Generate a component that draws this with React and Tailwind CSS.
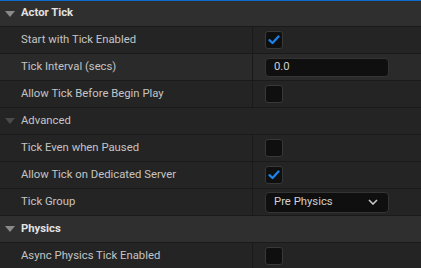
const font = { fontFamily: 'Roboto, "Liberation Sans", sans-serif' };

function Arrow({ muted }) {
  return (
    <svg width="10" height="6" viewBox="0 0 10 6" className="ml-[5px] mr-[6px]">
      <polygon points="0,0 10,0 5,6" fill={muted ? '#4a4a4a' : '#8a8a8a'} />
    </svg>
  );
}

function Category({ title, bold = true, dark = false }) {
  return (
    <div
      className={`flex items-center h-[27px] border-b border-[#1a1a1a] ${dark ? 'bg-[#242424]' : 'bg-[#2f2f2f]'}`}
    >
      <Arrow muted={dark} />
      <span className={`text-[11.3px] ${bold ? 'font-bold text-[#e2e2e2]' : 'text-[#c4c4c4]'}`}>{title}</span>
    </div>
  );
}

function Checkbox({ checked }) {
  return (
    <div className="w-[18px] h-[18px] rounded-[3px] bg-[#0f0f0f] border border-[#383838] flex items-center justify-center">
      {checked && (
        <svg width="12" height="10" viewBox="0 0 12 10">
          <path d="M1.5 5.2 L4.5 8 L10.5 1.5" stroke="#1c82ea" strokeWidth="2.3" fill="none" strokeLinecap="round" strokeLinejoin="round" />
        </svg>
      )}
    </div>
  );
}

function Row({ label, children, hover }) {
  return (
    <div className={`flex h-[27px] border-b border-[#1a1a1a] ${hover ? 'bg-[#2a2a2a]' : 'bg-[#242424]'}`}>
      <div className="w-[253px] flex items-center pl-[21px] text-[11.3px] text-[#c4c4c4] border-r border-[#1a1a1a]">
        {label}
      </div>
      <div className="flex-1 flex items-center pl-[12px]">{children}</div>
    </div>
  );
}

export default function App() {
  return (
    <div className="w-[421px] h-[268px] overflow-hidden bg-[#242424] select-none" style={font}>
      <div className="h-px bg-[#0e6bd0]" />
      <div className="flex items-center h-[26px] border-b border-[#1a1a1a] bg-[#2f2f2f]">
        <Arrow />
        <span className="text-[11.3px] font-bold text-[#e2e2e2]">Actor Tick</span>
      </div>
      <Row label="Start with Tick Enabled">
        <Checkbox checked />
      </Row>
      <Row label="Tick Interval (secs)" hover>
        <div className="w-[124px] h-[19px] rounded-[4px] bg-[#0f0f0f] border border-[#343434] flex items-center pl-[8px] text-[11.3px] text-[#d0d0d0]">
          0.0
        </div>
      </Row>
      <Row label="Allow Tick Before Begin Play">
        <Checkbox />
      </Row>
      <Category title="Advanced" bold={false} dark />
      <Row label="Tick Even when Paused">
        <Checkbox />
      </Row>
      <Row label="Allow Tick on Dedicated Server">
        <Checkbox checked />
      </Row>
      <Row label="Tick Group">
        <div className="w-[124px] h-[21px] rounded-[4px] bg-[#0f0f0f] border border-[#343434] flex items-center justify-between pl-[8px] pr-[10px] text-[11.3px] text-[#d0d0d0]">
          <span>Pre Physics</span>
          <svg width="10" height="6" viewBox="0 0 10 6">
            <path d="M1 1 L5 5 L9 1" stroke="#c8c8c8" strokeWidth="1.6" fill="none" />
          </svg>
        </div>
      </Row>
      <Category title="Physics" />
      <Row label="Async Physics Tick Enabled">
        <Checkbox />
      </Row>
    </div>
  );
}
